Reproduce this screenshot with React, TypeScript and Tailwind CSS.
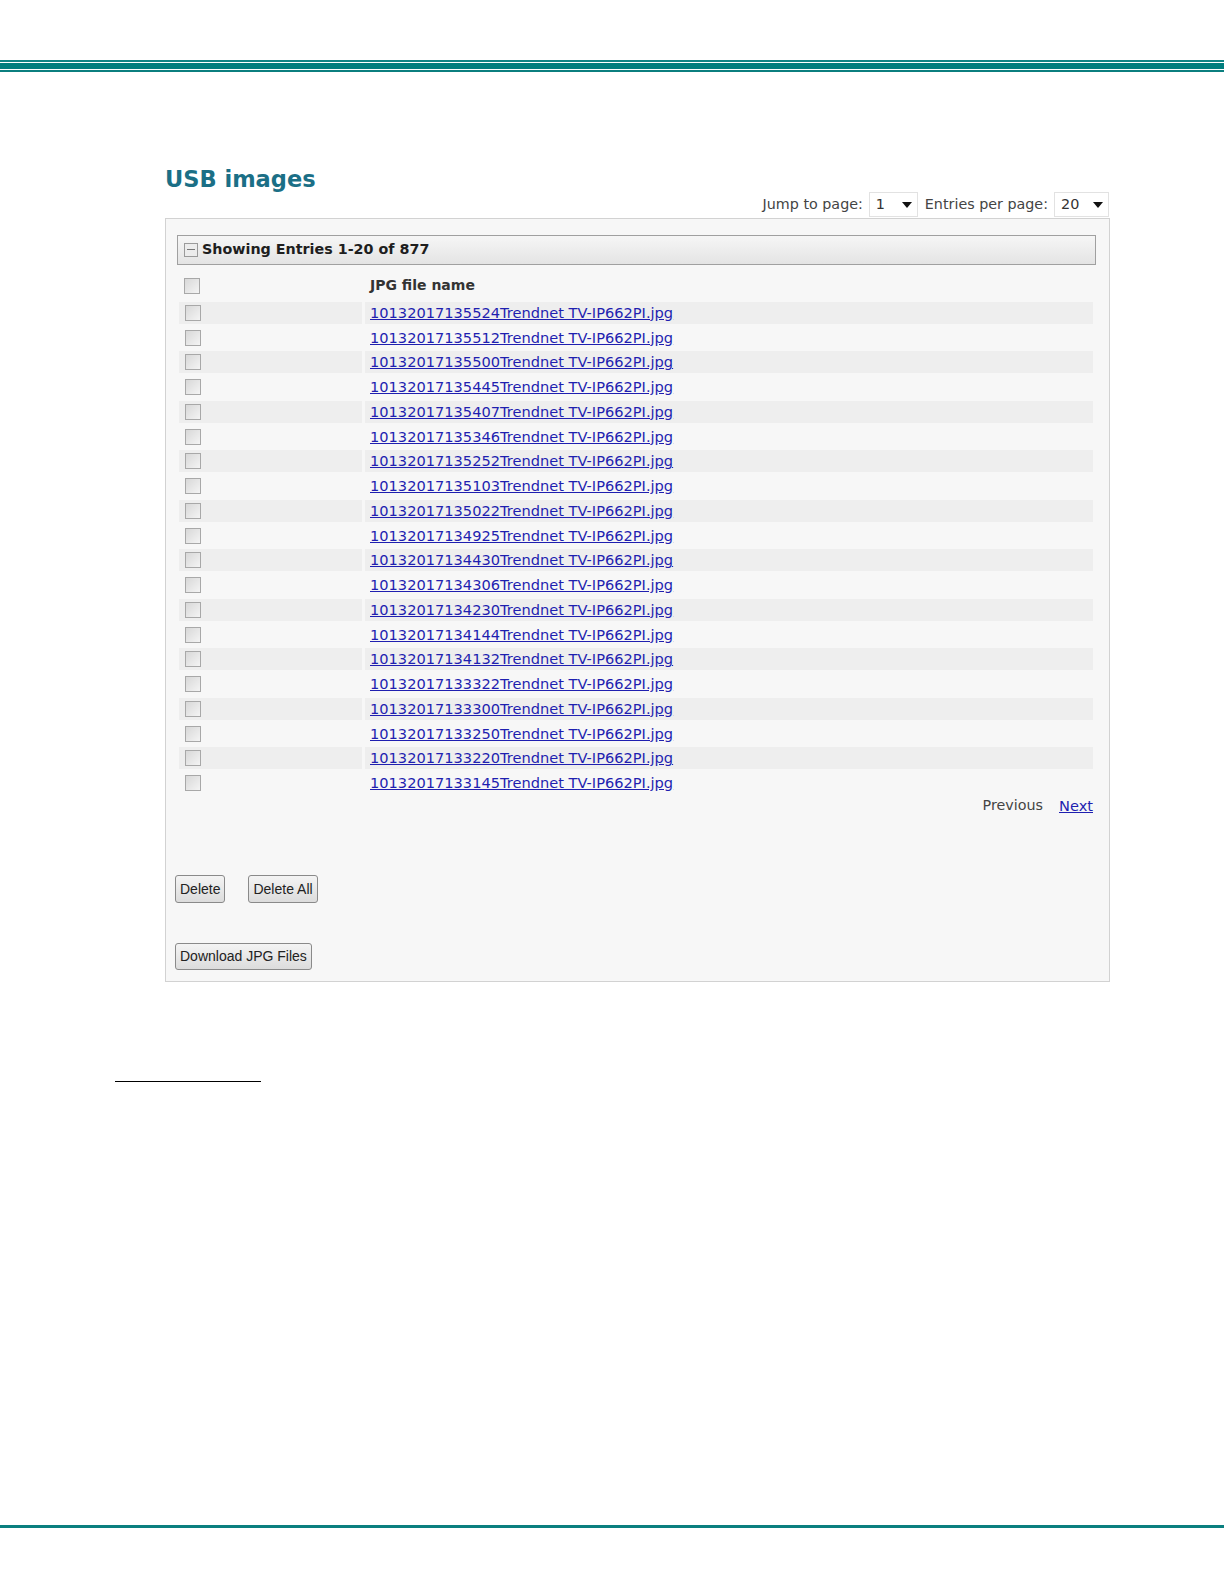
import React from "react";

const files = [
  "10132017135524",
  "10132017135512",
  "10132017135500",
  "10132017135445",
  "10132017135407",
  "10132017135346",
  "10132017135252",
  "10132017135103",
  "10132017135022",
  "10132017134925",
  "10132017134430",
  "10132017134306",
  "10132017134230",
  "10132017134144",
  "10132017134132",
  "10132017133322",
  "10132017133300",
  "10132017133250",
  "10132017133220",
  "10132017133145",
];

function Box() {
  return (
    <div className="w-[16px] h-[16px] border border-[#a8a8a8] bg-gradient-to-br from-[#d8d8d8] to-[#f4f4f4]" />
  );
}

function Select({ value, width }: { value: string; width: string }) {
  return (
    <div
      className={`${width} h-[25px] bg-white border border-[#e2e2e2] flex items-center justify-between pl-[6px] pr-[5px] text-[14.4px] text-[#333]`}
    >
      <span>{value}</span>
      <svg width="10" height="6" viewBox="0 0 10 6">
        <polygon points="0,0 10,0 5,6" fill="#111" />
      </svg>
    </div>
  );
}

function Btn({ label, h }: { label: string; h: string }) {
  return (
    <button
      className={`${h} px-[4px] border border-[#8a8a8a] rounded-[3px] bg-gradient-to-b from-[#f4f4f4] to-[#dcdcdc] text-[14px] text-[#222] leading-none`}
      style={{ fontFamily: '"Liberation Sans", Arial, sans-serif' }}
    >
      {label}
    </button>
  );
}

export default function App() {
  return (
    <div
      className="w-[1224px] h-[1584px] bg-white flex flex-col"
      style={{ fontFamily: '"DejaVu Sans", Verdana, sans-serif' }}
    >
      {/* top stripes */}
      <div className="mt-[60px] flex flex-col">
        <div className="h-[1.5px] bg-[#118484]" />
        <div className="h-[1.5px] bg-white" />
        <div className="h-[5.5px] bg-[#007d7d]" />
        <div className="h-[1.5px] bg-white" />
        <div className="h-[1.5px] bg-[#0b7f7f]" />
      </div>

      <div className="ml-[165px] mt-[95px] w-[945px] flex flex-col">
        <h1 className="text-[22.5px] leading-[24px] font-bold text-[#1b6f86]">USB images</h1>

        <div className="flex justify-end items-center pr-[1px] mt-[1px] text-[14.3px] text-[#444] h-[26px]">
          <span className="mr-[6px]">Jump to page:</span>
          <Select value="1" width="w-[49px]" />
          <span className="ml-[7px] mr-[6px]">Entries per page:</span>
          <Select value="20" width="w-[55px]" />
        </div>

        <div className="h-[764px] bg-[#f7f7f7] border border-[#d2d2d2] pt-[16px] pl-[11px] pr-[13px]">
          <div className="h-[30px] border border-[#a0a0a0] bg-gradient-to-b from-[#f6f6f6] to-[#e4e4e4] flex items-center pl-[6px] gap-[4px]">
            <div className="w-[14px] h-[14px] border border-[#9a9a9a] bg-[#ececec] flex items-center justify-center">
              <div className="w-[8px] h-[1px] bg-[#777]" />
            </div>
            <span className="text-[14.3px] font-bold text-[#1e1e1e]">Showing Entries 1-20 of 877</span>
          </div>

          <div className="mt-[9px] h-[24px] flex items-center">
            <div className="w-[193px] pl-[7px]">
              <Box />
            </div>
            <span className="text-[14px] font-bold text-[#333]">JPG file name</span>
          </div>

          <div className="mt-[3px] flex flex-col">
            {files.map((f, i) => (
              <div key={f} className="h-[24.75px] flex items-center gap-[3px] pl-[2px] pr-[3px]">
                <div
                  className={`w-[183px] h-[22px] flex items-center pl-[6px] ${i % 2 === 0 ? "bg-[#eeeeee]" : ""}`}
                >
                  <Box />
                </div>
                <div
                  className={`flex-1 h-[22px] flex items-center pl-[5px] ${i % 2 === 0 ? "bg-[#eeeeee]" : ""}`}
                >
                  <a href="#" className="text-[14.6px] text-[#1f1fb0] underline">
                    {f}Trendnet TV-IP662PI.jpg
                  </a>
                </div>
              </div>
            ))}
          </div>

          <div className="h-[20px] flex justify-end items-center gap-[16px] pr-[3px] text-[14.3px]">
            <span className="text-[#444]">Previous</span>
            <a href="#" className="text-[#1f1fb0] underline text-[14.6px]">
              Next
            </a>
          </div>

          <div className="mt-[59px] flex gap-[23px] -ml-[2px]">
            <Btn label="Delete" h="h-[28px]" />
            <Btn label="Delete All" h="h-[28px]" />
          </div>

          <div className="mt-[40px] -ml-[2px]">
            <Btn label="Download JPG Files" h="h-[27px]" />
          </div>
        </div>
      </div>

      {/* footnote rule */}
      <div className="ml-[115px] mt-[99px] w-[146px] h-[1px] bg-black" />

      {/* bottom rule */}
      <div className="mt-[443px] h-[3px] bg-[#0a7f7f]" />
    </div>
  );
}
